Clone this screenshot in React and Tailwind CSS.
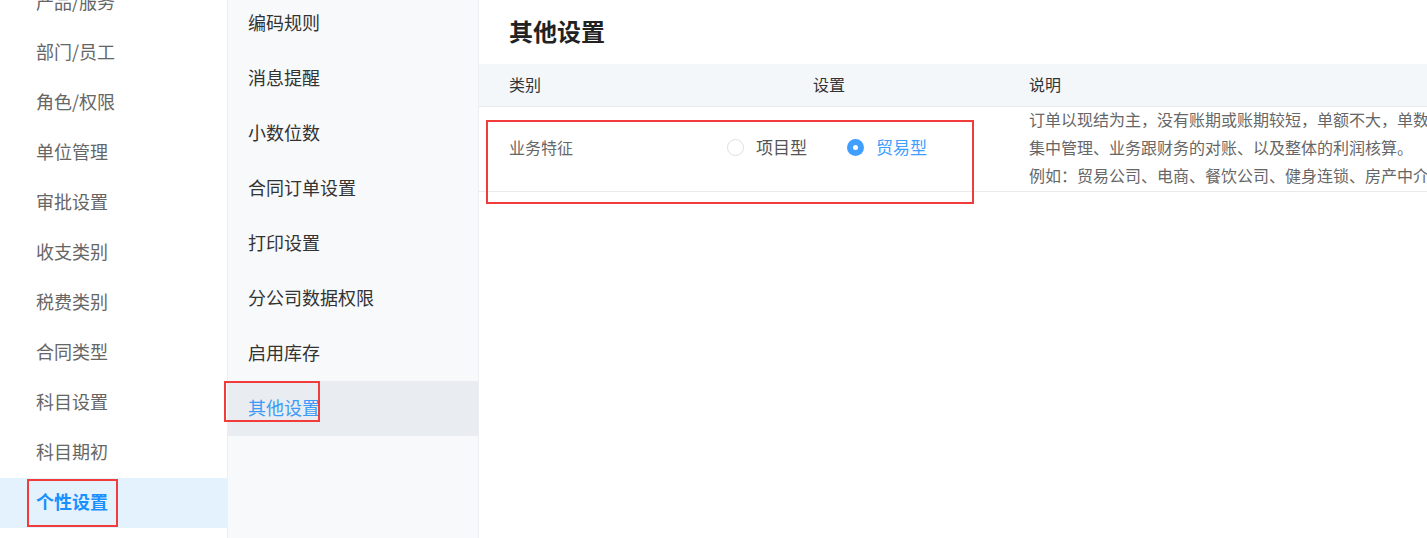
import React from "react";

const font = { fontFamily: '"Noto Sans CJK SC", "Noto Sans", sans-serif' };

const mainMenu = [
  "产品/服务",
  "部门/员工",
  "角色/权限",
  "单位管理",
  "审批设置",
  "收支类别",
  "税费类别",
  "合同类型",
  "科目设置",
  "科目期初",
  "个性设置",
];

const subMenu = [
  "编码规则",
  "消息提醒",
  "小数位数",
  "合同订单设置",
  "打印设置",
  "分公司数据权限",
  "启用库存",
  "其他设置",
];

const Radio = ({ checked, label }) => (
  <label className="flex items-center gap-[12px] cursor-pointer shrink-0">
    {checked ? (
      <span className="w-[17px] h-[17px] rounded-full bg-[#409eff] flex items-center justify-center">
        <span className="w-[5px] h-[5px] rounded-full bg-white" />
      </span>
    ) : (
      <span className="w-[17px] h-[17px] rounded-full border border-[#dcdfe6] bg-white" />
    )}
    <span className={`text-[17px] ${checked ? "text-[#409eff]" : "text-[#555]"}`}>{label}</span>
  </label>
);

export default function App() {
  return (
    <div className="relative flex h-[538px] w-[1427px] overflow-hidden bg-white" style={font}>
      {/* main menu */}
      <div className="w-[227px] shrink-0 bg-white">
        <ul className="-mt-[22px]">
          {mainMenu.map((item) => {
            const active = item === "个性设置";
            return (
              <li
                key={item}
                className={`h-[50px] flex items-center pl-[36px] pb-[3px] text-[18px] ${
                  active ? "bg-[#e4f2fe] text-[#1a90ff] font-bold" : "text-[#666]"
                }`}
              >
                {item}
              </li>
            );
          })}
        </ul>
      </div>

      {/* sub menu */}
      <div className="w-[252px] shrink-0 bg-[#f8f9fb] border-l border-r border-[#eceef2]">
        <ul className="-mt-[4px]">
          {subMenu.map((item) => {
            const active = item === "其他设置";
            return (
              <li
                key={item}
                className={`h-[55px] flex items-center pl-[20px] pb-[3px] text-[18px] ${
                  active ? "bg-[#e9ecf0] text-[#3d9bf7]" : "text-[#333]"
                }`}
              >
                {item}
              </li>
            );
          })}
        </ul>
      </div>

      {/* content */}
      <div className="flex-1 min-w-0 overflow-hidden">
        <div className="h-[64px] flex items-center pl-[30px] pb-[3px] text-[24px] font-bold text-[#222]">
          其他设置
        </div>
        <div className="h-[43px] flex items-center bg-[#f4f7fa] border-b border-[#e6e9ee] pl-[30px] pb-[3px] text-[16px] text-[#333]">
          <div className="w-[304px] shrink-0">类别</div>
          <div className="w-[216px] shrink-0">设置</div>
          <div className="shrink-0">说明</div>
        </div>
        <div className="h-[85px] flex items-center border-b border-[#e8eaee] pl-[30px] pb-[4px]">
          <div className="w-[218px] shrink-0 text-[16px] text-[#666]">业务特征</div>
          <div className="w-[302px] shrink-0 flex items-center gap-[40px]">
            <Radio label="项目型" />
            <Radio label="贸易型" checked />
          </div>
          <div className="shrink-0 text-[16px] leading-[28px] text-[#666] whitespace-nowrap">
            <p>订单以现结为主，没有账期或账期较短，单额不大，单数量多，需要对订单进行</p>
            <p>集中管理、业务跟财务的对账、以及整体的利润核算。</p>
            <p>例如：贸易公司、电商、餐饮公司、健身连锁、房产中介等。</p>
          </div>
        </div>
      </div>

      {/* highlight boxes */}
      <div className="absolute left-[27px] top-[479px] w-[91px] h-[48px] border-2 border-[#f23c3c]" />
      <div className="absolute left-[224px] top-[381px] w-[96px] h-[41px] border-2 border-[#f23c3c]" />
      <div className="absolute left-[486px] top-[120px] w-[488px] h-[84px] border-2 border-[#f23c3c]" />
    </div>
  );
}
